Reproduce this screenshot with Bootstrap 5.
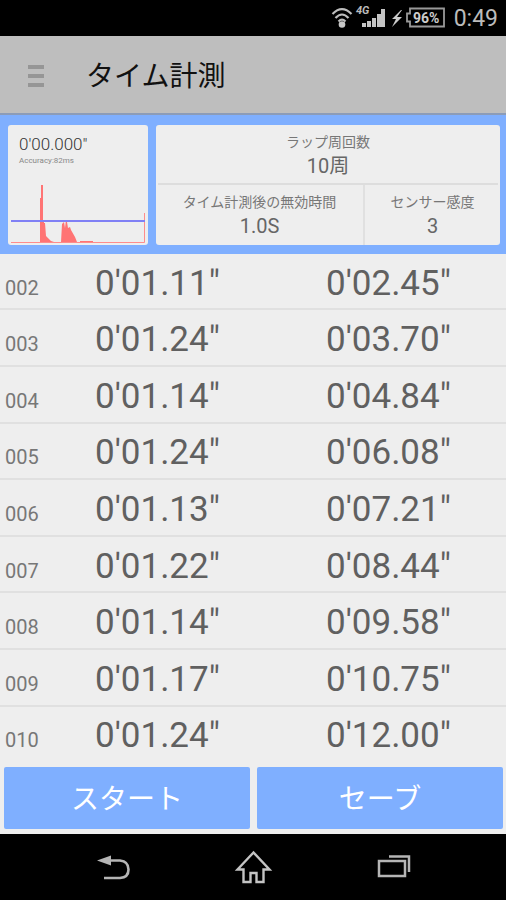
<!DOCTYPE html>
<html lang="ja">
<head>
<meta charset="utf-8">
<meta name="viewport" content="width=device-width, initial-scale=1">
<title>タイム計測</title>
<link href="https://cdn.jsdelivr.net/npm/bootstrap@5.3.0/dist/css/bootstrap.min.css" rel="stylesheet">
<style>
body { font-family: Roboto, "Noto Sans CJK JP", sans-serif; background: #eee; color: #666; }
.status-bar { height: 36px; background: #000; color: #bbb; padding: 2px 8px 0; }
.clock { font-size: 23px; line-height: 34px; margin-left: 8px; }
.title-bar { height: 79px; background: #bebebe; border-bottom: 2px solid #8c9cb8; padding: 2px 0 0 28px; }
.title-bar h1 { font-size: 28px; line-height: 40px; color: #111; margin-left: 42px; padding-top: 2px; }
.menu-btn { width: 16px; height: 22px; }
.menu-btn i { height: 4px; background: #969696; }
.panel { background: #7fafff; padding: 10px 6px 9px 8px; gap: 8px; height: 139px; }
.tile { background: #eee; border-radius: 3px; }
.sensor { width: 140px; padding: 9px 3px 1px; }
.timer { font-size: 17px; line-height: 20px; font-weight: 300; color: #333; padding-left: 8px; }
.accuracy { font-size: 8px; line-height: 14px; color: #888; padding-left: 8px; }
.setting { padding-top: 5px; }
.setting dt { font-size: 14px; line-height: 24px; font-weight: 400; color: #777; }
.setting dd { font-size: 20px; line-height: 24px; }
.laps-setting { height: 60px; margin: 0 2px; border-bottom: 2px solid #ddd; }
.delay-setting { width: 209px; border-right: 2px solid #e0e0e0; }
.lap-list { padding-bottom: 4px; }
.laps th { width: 95px; font-size: 20px; line-height: 24px; font-weight: 400; padding: 13px 0 0 5px; color: #777; }
.laps td { font-size: 35px; line-height: 40px; padding: 5px 0 0; color: #606060; }
.laps td:first-of-type { width: 231px; }
.laps tr + tr { border-top: 2px solid #e0e0e0; }
.actions { padding: 2px 3px 5px 4px; gap: 7px; }
.btn-timer { height: 62px; padding: 4px 0 0; font-size: 28px; line-height: 40px; --bs-btn-color: #fff; --bs-btn-bg: #7fafff; --bs-btn-hover-color: #fff; --bs-btn-hover-bg: #6a9ff5; --bs-btn-active-color: #fff; --bs-btn-active-bg: #5b90e6; --bs-btn-border-radius: 2px; }
.system-nav { height: 66px; background: #000; padding: 0 92px; }
</style>
</head>
<body class="d-flex flex-column vh-100">
<div class="status-bar d-flex justify-content-end align-items-center">
  <svg width="116" height="34" viewBox="0 1 116 34" role="img" aria-label="Wi-Fi、4G、バッテリー96%">
    <g fill="none" stroke="#bdbdbd" stroke-width="2.2">
      <path d="M2.500 13Q12 3.500 21.500 13M5.500 17Q12 10 18.500 17M8.500 20.500Q12 17 15.500 20.500"/>
    </g>
    <circle cx="12" cy="23.500" r="3.300" fill="#c8c8c8"/>
    <text x="26" y="13" font-size="11" font-weight="700" font-style="italic" fill="#bbb">4G</text>
    <path fill="#c4c4c4" d="M32 22h4v4h-4zM37 20h4v6h-4zM42 17h4v9h-4zM47 13h4v13h-4zM51 8h4v18h-4z"/>
    <path fill="#ccc" d="M71 9l-9 9h4l-4 8 10-10h-5l5-7z"/>
    <path fill="none" stroke="#999" stroke-width="1.800" d="M80 7.500h34v18H80v-5h-3v-8h3z"/>
    <text x="83" y="22" font-size="14" font-weight="700" fill="#ccc">96%</text>
  </svg>
  <span class="clock">0:49</span>
</div>
<header class="title-bar d-flex align-items-center">
  <button type="button" class="menu-btn btn p-0 border-0 rounded-0 d-flex flex-column justify-content-between" aria-label="メニュー">
    <i class="w-100"></i><i class="w-100"></i><i class="w-100"></i>
  </button>
  <h1 class="mb-0 fw-normal">タイム計測</h1>
</header>
<section class="panel d-flex">
  <div class="tile sensor d-flex flex-column justify-content-between">
    <div>
      <div class="timer">0'00.000"</div>
      <div class="accuracy">Accuracy:82ms</div>
    </div>
    <svg class="w-100" height="64" viewBox="0 0 134 64" preserveAspectRatio="none" role="img" aria-label="センサーの波形">
      <path fill="#ff7474" d="M29 62V18h1V5h2v36h1v2h1l1 13 5 5 3 1zM50 62l1-18 2-2 1 6 1-8 1 2 1 6 2-1 1 3 4 7 2 5zM69 61h13v1H69z"/>
      <path fill="none" stroke="#ff8c8c" d="M0 62.500h133.500V33"/>
      <path stroke="#8080f5" stroke-width="2" d="M0 41h134"/>
    </svg>
  </div>
  <dl class="tile flex-fill d-flex flex-column text-center mb-0">
    <div class="setting laps-setting"><dt>ラップ周回数</dt><dd class="mb-0">10周</dd></div>
    <div class="d-flex flex-fill">
      <div class="setting delay-setting"><dt>タイム計測後の無効時間</dt><dd class="mb-0">1.0S</dd></div>
      <div class="setting flex-fill"><dt>センサー感度</dt><dd class="mb-0">3</dd></div>
    </div>
  </dl>
</section>
<main class="lap-list flex-fill d-flex">
  <table class="laps w-100 align-middle" aria-label="ラップタイム">
    <tbody>
      <tr><th scope="row">002</th><td>0'01.11"</td><td>0'02.45"</td></tr>
      <tr><th scope="row">003</th><td>0'01.24"</td><td>0'03.70"</td></tr>
      <tr><th scope="row">004</th><td>0'01.14"</td><td>0'04.84"</td></tr>
      <tr><th scope="row">005</th><td>0'01.24"</td><td>0'06.08"</td></tr>
      <tr><th scope="row">006</th><td>0'01.13"</td><td>0'07.21"</td></tr>
      <tr><th scope="row">007</th><td>0'01.22"</td><td>0'08.44"</td></tr>
      <tr><th scope="row">008</th><td>0'01.14"</td><td>0'09.58"</td></tr>
      <tr><th scope="row">009</th><td>0'01.17"</td><td>0'10.75"</td></tr>
      <tr><th scope="row">010</th><td>0'01.24"</td><td>0'12.00"</td></tr>
    </tbody>
  </table>
</main>
<div class="actions d-flex">
  <button type="button" class="btn btn-timer w-50 border-0">スタート</button>
  <button type="button" class="btn btn-timer w-50 border-0">セーブ</button>
</div>
<nav class="system-nav d-flex justify-content-between align-items-center" aria-label="システム">
  <button type="button" class="btn p-0 border-0 d-flex" aria-label="戻る">
    <svg width="44" height="40" viewBox="0 0 44 40"><path fill="none" stroke="#b5b5b5" stroke-width="2.600" d="M14 13.500h14q8.500 1 8.500 9t-8.500 8.500H12"/><path fill="#b5b5b5" d="M5 13.500l14-5v10z"/></svg>
  </button>
  <button type="button" class="btn p-0 border-0 d-flex" aria-label="ホーム">
    <svg width="44" height="40" viewBox="0 0 44 40"><path fill="none" stroke="#c4c4c4" stroke-width="2.400" d="M22.500 5.500L6.500 22.500h6V35h7v-9h6v9h7V22.500h6z"/></svg>
  </button>
  <button type="button" class="btn p-0 border-0 d-flex" aria-label="最近使ったアプリ">
    <svg width="44" height="40" viewBox="0 0 44 40"><path fill="none" stroke="#b5b5b5" stroke-width="2.500" d="M9 14h26v15H9zM19 9.500h20V25"/></svg>
  </button>
</nav>
<script src="https://cdn.jsdelivr.net/npm/bootstrap@5.3.0/dist/js/bootstrap.bundle.min.js"></script>
</body>
</html>
